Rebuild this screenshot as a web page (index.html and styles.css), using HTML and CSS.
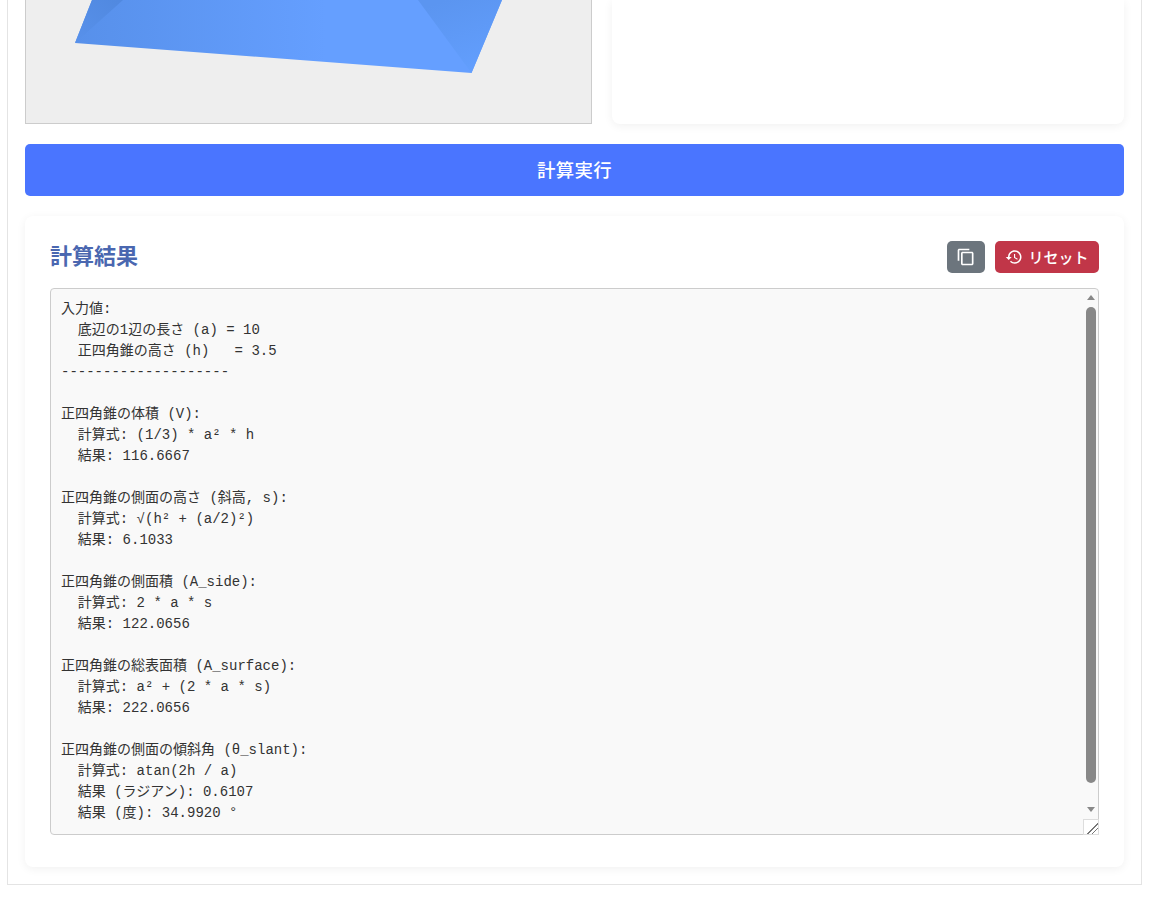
FILE: index.html
```html
<!DOCTYPE html>
<html lang="ja">
<head>
<meta charset="utf-8">
<title>正四角錐の計算</title>
<link rel="stylesheet" href="styles.css">
</head>
<body>
<main class="container">
  <section class="top-row">
    <div class="canvas-panel">
      <svg class="pyramid" viewBox="0 0 565 123" width="565" height="123" aria-hidden="true">
        <defs>
          <linearGradient id="front" gradientUnits="userSpaceOnUse" x1="49" y1="0" x2="300" y2="0">
            <stop offset="0" stop-color="#5790ea"/>
            <stop offset="1" stop-color="#659fff"/>
          </linearGradient>
          <linearGradient id="left" gradientUnits="userSpaceOnUse" x1="90" y1="0" x2="55" y2="40">
            <stop offset="0" stop-color="#5189e0"/>
            <stop offset="1" stop-color="#5790ea"/>
          </linearGradient>
          <linearGradient id="right" gradientUnits="userSpaceOnUse" x1="420" y1="0" x2="445" y2="70">
            <stop offset="0" stop-color="#5b95f0"/>
            <stop offset="1" stop-color="#629efd"/>
          </linearGradient>
        </defs>
        <polygon points="49,43 445.5,73 476,0 66,0" fill="url(#front)"/>
        <polygon points="49,43 97,0 66,0" fill="url(#left)"/>
        <polygon points="445.5,73 392,0 476,0" fill="url(#right)"/>
      </svg>
    </div>
    <div class="card side-card"></div>
  </section>

  <button class="run-button" type="button">計算実行</button>

  <section class="card result-card">
    <header class="result-head">
      <h2 class="result-title">計算結果</h2>
      <div class="actions">
        <button class="btn btn-copy" type="button" aria-label="コピー">
          <svg class="icon icon-copy" viewBox="0 0 24 24" preserveAspectRatio="none"><path d="M16 1H4c-1.1 0-2 .9-2 2v14h2V3h12V1zm3 4H8c-1.1 0-2 .9-2 2v14c0 1.1.9 2 2 2h11c1.1 0 2-.9 2-2V7c0-1.1-.9-2-2-2zm0 16H8V7h11v14z"/></svg>
        </button>
        <button class="btn btn-reset" type="button">
          <svg class="icon icon-small" viewBox="0 0 24 24"><path d="M13 3c-4.97 0-9 4.03-9 9H1l3.89 3.89.07.14L9 12H6c0-3.87 3.13-7 7-7s7 3.13 7 7-3.13 7-7 7c-1.93 0-3.68-.79-4.94-2.06l-1.42 1.42C8.27 19.99 10.51 21 13 21c4.97 0 9-4.03 9-9s-4.03-9-9-9zm-1 5v5l4.28 2.54.72-1.21-3.5-2.08V8H12z"/></svg>
          <span>リセット</span>
        </button>
      </div>
    </header>
    <div class="output-wrap">
      <pre class="output">入力値:
  底辺の1辺の長さ (a) = 10
  正四角錐の高さ (h)   = 3.5
--------------------

正四角錐の体積 (V):
  計算式: (1/3) * a² * h
  結果: 116.6667

正四角錐の側面の高さ (斜高, s):
  計算式: √(h² + (a/2)²)
  結果: 6.1033

正四角錐の側面積 (A_side):
  計算式: 2 * a * s
  結果: 122.0656

正四角錐の総表面積 (A_surface):
  計算式: a² + (2 * a * s)
  結果: 222.0656

正四角錐の側面の傾斜角 (θ_slant):
  計算式: atan(2h / a)
  結果 (ラジアン): 0.6107
  結果 (度): 34.9920 °</pre>
      <div class="scrollbar" aria-hidden="true">
        <span class="arrow arrow-up"></span>
        <span class="thumb"></span>
        <span class="arrow arrow-down"></span>
      </div>
      <span class="resizer" aria-hidden="true"></span>
    </div>
  </section>
</main>
</body>
</html>
```
FILE: styles.css
```css
* {
  box-sizing: border-box;
}

html,
body {
  margin: 0;
  background: #fff;
}

body {
  padding: 0 11px 14px 7px;
  font-family: Roboto, "Noto Sans CJK JP", sans-serif;
}

.container {
  display: flex;
  flex-direction: column;
  gap: 20px;
  padding: 0 17px 17px;
  border: 1px solid #e4e4e4;
  border-top: none;
  background: #fff;
}

.top-row {
  display: grid;
  grid-template-columns: 567px 1fr;
  gap: 20px;
  height: 124px;
}

.canvas-panel {
  background: #eee;
  border: 1px solid #ccc;
  border-top: none;
  overflow: hidden;
}

.pyramid {
  display: block;
}

.card {
  background: #fff;
  border-radius: 8px;
  box-shadow: 0 2px 10px rgba(0, 0, 0, 0.06);
}

.side-card {
  border-top-left-radius: 0;
  border-top-right-radius: 0;
}

.run-button {
  display: block;
  width: 100%;
  height: 52px;
  padding: 0 0 3px;
  border: none;
  border-radius: 5px;
  background: #4a75ff;
  color: #fff;
  font-family: inherit;
  font-size: 18.4px;
  font-weight: 500;
  letter-spacing: 0.3px;
}

.result-card {
  padding: 25px;
  height: 651px;
}

.result-head {
  display: flex;
  align-items: center;
  justify-content: space-between;
  height: 32px;
  margin-bottom: 15px;
}

.result-title {
  margin: 0;
  color: #4a67b0;
  font-size: 22px;
  font-weight: 700;
  line-height: 32px;
}

.actions {
  display: flex;
  gap: 10px;
}

.btn {
  display: flex;
  align-items: center;
  justify-content: center;
  gap: 5px;
  height: 32px;
  border: none;
  border-radius: 5px;
  color: #fff;
  font-family: inherit;
  font-size: 15px;
  font-weight: 500;
  padding: 0;
}

.btn-copy {
  width: 38px;
  background: #6c757d;
}

.btn-reset {
  width: 104px;
  padding: 0 0 2px;
  background: #c13648;
}

.icon {
  display: block;
  width: 20px;
  height: 20px;
  fill: #fff;
}

.icon-copy {
  height: 18px;
}

.icon-small {
  width: 18px;
  height: 18px;
  margin-top: 2px;
}

.output-wrap {
  position: relative;
  height: 547px;
}

.output {
  margin: 0;
  height: 100%;
  padding: 10px;
  overflow: hidden;
  background: #f9f9f9;
  border: 1px solid #ccc;
  border-radius: 4px;
  color: #333;
  font-family: "Liberation Mono", "Noto Sans CJK JP", monospace;
  font-size: 14px;
  line-height: 21px;
  white-space: pre;
}

.scrollbar {
  position: absolute;
  top: 1px;
  right: 1px;
  bottom: 1px;
  width: 15px;
  display: flex;
  flex-direction: column;
  align-items: center;
  padding-top: 6px;
}

.arrow {
  width: 0;
  height: 0;
  border-left: 4.5px solid transparent;
  border-right: 4.5px solid transparent;
}

.arrow-up {
  border-bottom: 5px solid #888;
}

.arrow-down {
  margin-top: 24px;
  border-top: 5px solid #888;
}

.thumb {
  width: 10px;
  height: 476px;
  margin-top: 7px;
  border-radius: 5px;
  background: #888;
}

.resizer {
  position: absolute;
  right: 0;
  bottom: 0;
  width: 16px;
  height: 16px;
  background: #fff linear-gradient(135deg, transparent 0 60%, #777 60% 65%, transparent 65% 76%, #777 76% 81%, transparent 81%);
  border: 1px solid #ddd;
}
```
